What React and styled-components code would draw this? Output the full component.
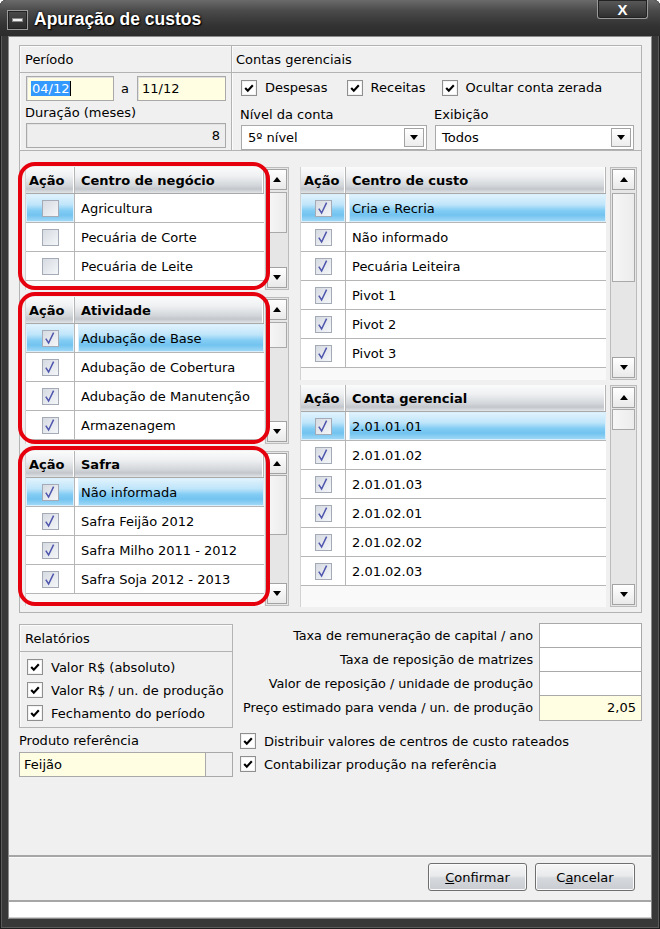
import React from 'react';
import styled, { createGlobalStyle } from 'styled-components';

const GlobalStyle = createGlobalStyle`
  html, body {
    margin: 0;
    padding: 0;
    background: #ffffff;
  }
  body {
    font-family: "DejaVu Sans", Verdana, sans-serif;
    font-size: 13px;
    color: #000;
  }
  * {
    box-sizing: border-box;
  }
`

const centrosNegocio = [
  {label: 'Agricultura', checked: false, selCheck: true},
  {label: 'Pecuária de Corte', checked: false},
  {label: 'Pecuária de Leite', checked: false}
]

const atividades = [
  {label: 'Adubação de Base', checked: true, selCheck: true, selText: true},
  {label: 'Adubação de Cobertura', checked: true},
  {label: 'Adubação de Manutenção', checked: true},
  {label: 'Armazenagem', checked: true}
]

const safras = [
  {label: 'Não informada', checked: true, selCheck: true, selText: true},
  {label: 'Safra Feijão 2012', checked: true},
  {label: 'Safra Milho 2011 - 2012', checked: true},
  {label: 'Safra Soja 2012 - 2013', checked: true}
]

const centrosCusto = [
  {label: 'Cria e Recria', checked: true, selCheck: true, selText: true},
  {label: 'Não informado', checked: true},
  {label: 'Pecuária Leiteira', checked: true},
  {label: 'Pivot 1', checked: true},
  {label: 'Pivot 2', checked: true},
  {label: 'Pivot 3', checked: true}
]

const contas = [
  {label: '2.01.01.01', checked: true, selCheck: true, selText: true},
  {label: '2.01.01.02', checked: true},
  {label: '2.01.01.03', checked: true},
  {label: '2.01.02.01', checked: true},
  {label: '2.01.02.02', checked: true},
  {label: '2.01.02.03', checked: true}
]

const CheckBox = ({checked = true}) => (
  <Box>
    {checked && (
      <svg width="14" height="14" viewBox="0 0 14 14">
        <path d="M3.2 7 L5.8 9.8 L10.8 4.2" fill="none" stroke="#000" strokeWidth="2.1" />
      </svg>
    )}
  </Box>
)

const GridCheck = ({checked}) => (
  <GBox>
    {checked && (
      <svg width="14" height="14" viewBox="0 0 14 14">
        <path d="M2.8 7.6 L5.6 12 L10.6 1.6" fill="none" stroke="#4e55ad" strokeWidth="1.5" />
      </svg>
    )}
  </GBox>
)

const Scrollbar = ({w, gap, thumbTop, thumbH}) => (
  <SbFrame $w={w} $gap={gap}>
    <SbButton><ArrowUp /></SbButton>
    <SbTrack>
      <SbThumb style={{marginTop: thumbTop, height: thumbH}} />
    </SbTrack>
    <SbButton><ArrowDown /></SbButton>
  </SbFrame>
)

const DataGrid = ({title, rows, actionW, height, sbW, sbGap, thumbTop, thumbH, hl}) => (
  <GridWrap $h={height} $hl={hl}>
    <Table>
      <HeadRow>
        <HeadCell $w={actionW}>Ação</HeadCell>
        <HeadCell>{title}</HeadCell>
      </HeadRow>
      {rows.map(r => (
        <Row key={r.label}>
          <CheckCell $w={actionW} $sel={r.selCheck}><GridCheck checked={r.checked} /></CheckCell>
          <TextCell $sel={r.selText}>{r.label}</TextCell>
        </Row>
      ))}
    </Table>
    <Scrollbar w={sbW} gap={sbGap} thumbTop={thumbTop} thumbH={thumbH} />
  </GridWrap>
)

const Select = ({value, w}) => (
  <SelectBox $w={w}>
    <span>{value}</span>
    <DropBtn><ArrowDown /></DropBtn>
  </SelectBox>
)

export default function App() {
  return (
    <>
      <GlobalStyle />
      <Window>
        <TitleBar>
          <MinIcon><MinBar /></MinIcon>
          <Title>Apuração de custos</Title>
          <CloseBtn>X</CloseBtn>
        </TitleBar>
        <Client>
          <Main>
            <TopRow>
              <GroupBox $w={213}>
                <GroupHeader>Período</GroupHeader>
                <PeriodBody>
                  <InlineRow>
                    <TextInput $w={88} $yellow><Selected>04/12</Selected><Caret /></TextInput>
                    <Between>a</Between>
                    <TextInput $w={89} $yellow>11/12</TextInput>
                  </InlineRow>
                  <FieldLabel>Duração (meses)</FieldLabel>
                  <TextInput $w={200} $disabled $right>8</TextInput>
                </PeriodBody>
              </GroupBox>
              <GroupBox $noLeft>
                <GroupHeader $pad={4}>Contas gerenciais</GroupHeader>
                <ContasBody>
                  <InlineRow>
                    <CheckLabel $mr={19}><CheckBox />Despesas</CheckLabel>
                    <CheckLabel $mr={16}><CheckBox />Receitas</CheckLabel>
                    <CheckLabel><CheckBox />Ocultar conta zerada</CheckLabel>
                  </InlineRow>
                  <SelectRow>
                    <SelectField>
                      <FieldLabel>Nível da conta</FieldLabel>
                      <Select value="5º nível" w={186} />
                    </SelectField>
                    <SelectField>
                      <FieldLabel>Exibição</FieldLabel>
                      <Select value="Todos" w={199} />
                    </SelectField>
                  </SelectRow>
                </ContasBody>
              </GroupBox>
            </TopRow>

            <GridsPanel>
              <LeftCol>
                <DataGrid title="Centro de negócio" rows={centrosNegocio} actionW={49} height={123}
                  sbW={24} sbGap={1} thumbTop={1} thumbH={41} hl />
                <DataGrid title="Atividade" rows={atividades} actionW={49} height={147}
                  sbW={24} sbGap={1} thumbTop={1} thumbH={26} hl />
                <DataGrid title="Safra" rows={safras} actionW={49} height={155}
                  sbW={24} sbGap={1} thumbTop={0} thumbH={60} hl />
              </LeftCol>
              <RightCol>
                <DataGrid title="Centro de custo" rows={centrosCusto} actionW={45} height={213}
                  sbW={27} sbGap={4} thumbTop={2} thumbH={89} />
                <DataGrid title="Conta gerencial" rows={contas} actionW={45} height={222}
                  sbW={27} sbGap={4} thumbTop={0} thumbH={21} />
              </RightCol>
            </GridsPanel>

            <BottomArea>
              <BottomLeft>
                <GroupBox $w={214} $h={104}>
                  <GroupHeader>Relatórios</GroupHeader>
                  <ReportList>
                    <CheckLabel><CheckBox />Valor R$ (absoluto)</CheckLabel>
                    <CheckLabel><CheckBox />Valor R$ / un. de produção</CheckLabel>
                    <CheckLabel><CheckBox />Fechamento do período</CheckLabel>
                  </ReportList>
                </GroupBox>
                <ProdutoLabel>Produto referência</ProdutoLabel>
                <LookupBox>
                  <LookupText>Feijão</LookupText>
                  <LookupBtn />
                </LookupBox>
              </BottomLeft>
              <BottomRight>
                <FieldRow>
                  <RowLabel>Taxa de remuneração de capital / ano</RowLabel>
                  <RowInput />
                </FieldRow>
                <FieldRow>
                  <RowLabel>Taxa de reposição de matrizes</RowLabel>
                  <RowInput />
                </FieldRow>
                <FieldRow>
                  <RowLabel>Valor de reposição / unidade de produção</RowLabel>
                  <RowInput />
                </FieldRow>
                <FieldRow>
                  <RowLabel>Preço estimado para venda / un. de produção</RowLabel>
                  <RowInput $yellow>2,05</RowInput>
                </FieldRow>
                <OptionList>
                  <CheckLabel><CheckBox />Distribuir valores de centros de custo rateados</CheckLabel>
                  <CheckLabel><CheckBox />Contabilizar produção na referência</CheckLabel>
                </OptionList>
              </BottomRight>
            </BottomArea>
          </Main>

          <ButtonBar>
            <DlgButton $w={99}><u>C</u>onfirmar</DlgButton>
            <DlgButton $w={100}>C<u>a</u>ncelar</DlgButton>
          </ButtonBar>
          <StatusBar />
        </Client>
      </Window>
    </>
  )
}

const Window = styled.div`
  width: 660px;
  height: 929px;
  background: #383838;
  border-radius: 6px 6px 0 0;
  box-shadow: inset 0 0 0 1px #1e1e1e, inset 0 0 0 2px #5a5a5a;

  display: flex;
  flex-direction: column;

  padding: 0 8px 10px 8px;
`

const TitleBar = styled.div`
  height: 36px;
  margin: 0 -8px;
  padding: 0 12px 0 7px;
  border-radius: 6px 6px 0 0;
  background: linear-gradient(#6a6a6a 0%, #4a4a4a 30%, #333 70%, #2c2c2c 100%);

  display: flex;
  align-items: center;
`

const MinIcon = styled.div`
  width: 21px;
  height: 20px;
  margin-top: 4px;
  border: 1px solid #9a9a9a;
  background: linear-gradient(#4a4a4a, #2a2a2a);
  box-shadow: inset 0 0 0 1px #222;

  display: flex;
  align-items: center;
  justify-content: center;
`

const MinBar = styled.div`
  width: 11px;
  height: 4px;
  background: #f0f0f0;
  border: 1px solid #888;
`

const Title = styled.div`
  flex: 1;
  margin-left: 6px;
  margin-top: 2px;

  font-family: "Liberation Sans", Arial, sans-serif;
  font-size: 17.5px;
  font-weight: bold;
  color: #ffffff;
  text-shadow: 0 0 3px #000, 1px 1px 1px #000;
`

const CloseBtn = styled.div`
  align-self: flex-start;
  width: 51px;
  height: 19px;
  border: 1px solid #9a9a9a;
  border-top: none;
  border-radius: 0 0 3px 3px;
  background: linear-gradient(#5a5a5a, #2e2e2e);
  box-shadow: inset 0 0 0 1px #222;

  display: flex;
  align-items: center;
  justify-content: center;

  font-family: "Liberation Sans", Arial, sans-serif;
  font-weight: bold;
  font-size: 15px;
  color: #fff;
`

const Client = styled.div`
  flex: 1;
  background: #f0f0f0;
  border: 1px solid #8a8a8a;

  display: flex;
  flex-direction: column;
`

const Main = styled.div`
  flex: 1;
  padding: 8px 9px 0 10px;

  display: flex;
  flex-direction: column;
`

const TopRow = styled.div`
  height: 106px;
  display: flex;
`

const GroupBox = styled.div`
  width: ${p => p.$w ? p.$w + 'px' : 'auto'};
  height: ${p => p.$h ? p.$h + 'px' : 'auto'};
  flex: ${p => p.$w ? 'none' : 1};

  border: 1px solid #b3b3b3;
  ${p => p.$noLeft && 'border-left: none;'}
  box-shadow: inset 1px 1px 0 #fbfbfb;

  display: flex;
  flex-direction: column;
`

const GroupHeader = styled.div`
  height: 27px;
  padding: 0 ${p => p.$pad || 5}px;
  border-bottom: 1px solid #b3b3b3;

  display: flex;
  align-items: center;
`

const PeriodBody = styled.div`
  padding: 3px 5px 0 6px;

  display: flex;
  flex-direction: column;
`

const ContasBody = styled.div`
  padding: 2px 6px 0 9px;

  display: flex;
  flex-direction: column;
`

const InlineRow = styled.div`
  display: flex;
  align-items: center;
  height: 25px;
`

const TextInput = styled.div`
  width: ${p => p.$w}px;
  height: 25px;
  padding: 0 5px 0 4px;
  border: 1px solid #a9a9a9;
  box-shadow: inset 1px 1px 0 #e2e2e2;
  background: ${p => p.$yellow ? '#fffde2' : p.$disabled ? '#eeeeee' : '#ffffff'};

  display: flex;
  align-items: center;
  justify-content: ${p => p.$right ? 'flex-end' : 'flex-start'};
`

const Selected = styled.span`
  background: #3399ff;
  color: #ffffff;
  padding: 0 1px;
`

const Caret = styled.span`
  width: 1px;
  height: 15px;
  background: #000;
`

const Between = styled.span`
  margin: 0 8px 0 7px;
`

const FieldLabel = styled.div`
  height: 22px;
  display: flex;
  align-items: center;
  margin-left: -1px;
`

const CheckLabel = styled.label`
  display: flex;
  align-items: center;
  gap: 8px;
  margin-right: ${p => p.$mr || 0}px;
  white-space: nowrap;
`

const Box = styled.span`
  width: 16px;
  height: 16px;
  border: 1px solid #8f8f8f;
  background: #ffffff;
  box-shadow: inset 0 0 0 1px #f2f2f2;

  display: flex;
  align-items: center;
  justify-content: center;
`

const SelectRow = styled.div`
  display: flex;
  gap: 8px;
  margin-top: 3px;
`

const SelectField = styled.div`
  display: flex;
  flex-direction: column;
`

const SelectBox = styled.div`
  width: ${p => p.$w}px;
  height: 25px;
  padding: 0 2px 0 6px;
  border: 1px solid #a9a9a9;
  background: #ffffff;

  display: flex;
  align-items: center;
  justify-content: space-between;
`

const DropBtn = styled.span`
  width: 20px;
  height: 19px;
  border: 1px solid #a3a3a3;
  background: linear-gradient(#ffffff, #ececec);

  display: flex;
  align-items: center;
  justify-content: center;
`

const ArrowUp = styled.span`
  width: 0;
  height: 0;
  border-left: 4px solid transparent;
  border-right: 4px solid transparent;
  border-bottom: 5px solid #000;
`

const ArrowDown = styled.span`
  width: 0;
  height: 0;
  border-left: 4px solid transparent;
  border-right: 4px solid transparent;
  border-top: 5px solid #000;
`

const GridsPanel = styled.div`
  height: 462px;
  padding: 16px 4px 0 5px;
  border: 1px solid #b3b3b3;
  border-top: none;

  display: flex;
  gap: 11px;
`

const LeftCol = styled.div`
  width: 264px;

  display: flex;
  flex-direction: column;
  gap: 7px;
`

const RightCol = styled.div`
  flex: 1;

  display: flex;
  flex-direction: column;
  gap: 5px;
`

const GridWrap = styled.div`
  height: ${p => p.$h}px;
  position: relative;
  display: flex;

  ${p => p.$hl && `
    &::after {
      content: '';
      position: absolute;
      left: -7px;
      top: -5px;
      right: 19px;
      bottom: 0;
      border: 4px solid #e6000e;
      border-radius: 17px;
      pointer-events: none;
    }
  `}
`

const Table = styled.div`
  flex: 1;
  overflow: hidden;
  background: #f9f9f9;
  border-left: 1px solid #d2d2d2;

  display: flex;
  flex-direction: column;
`

const HeadRow = styled.div`
  height: 27px;
  flex: none;
  border-bottom: 1px solid #a9a9a9;
  background: linear-gradient(#fbfbfb 0%, #eef0f2 35%, #d4d7db 70%, #c3c7cc 85%, #e2e4e6 100%);

  display: flex;
`

const HeadCell = styled.div`
  width: ${p => p.$w ? p.$w + 'px' : 'auto'};
  flex: ${p => p.$w ? 'none' : 1};
  padding-left: ${p => p.$w ? 3 : 6}px;
  border-right: 1px solid #b5b5b5;
  box-shadow: inset -1px 0 0 #fff;

  display: flex;
  align-items: center;

  font-weight: bold;
  white-space: nowrap;
`

const Row = styled.div`
  height: 29px;
  flex: none;
  background: #ffffff;
  border-bottom: 1px solid #b6b6b6;

  display: flex;
`

const selGradient = 'linear-gradient(#e3f4fd 0%, #bfe5fa 38%, #84cdf4 58%, #72c3f0 75%, #a6dbf7 100%)'

const CheckCell = styled.div`
  width: ${p => p.$w}px;
  flex: none;
  border-right: 1px solid #b6b6b6;
  background: ${p => p.$sel ? selGradient : '#ffffff'};
  box-shadow: ${p => p.$sel ? 'inset 0 0 0 1px #d9effb' : 'none'};

  display: flex;
  align-items: center;
  justify-content: center;
`

const TextCell = styled.div`
  flex: 1;
  padding-left: ${p => p.$sel ? 3 : 6}px;
  background: ${p => p.$sel ? selGradient : '#ffffff'};
  box-shadow: ${p => p.$sel ? 'inset 0 0 0 1px #d9effb' : 'none'};
  ${p => p.$sel && 'margin-left: 3px;'}

  display: flex;
  align-items: center;
  white-space: nowrap;
`

const GBox = styled.span`
  width: 17px;
  height: 17px;
  border: 1px solid #a4abb6;
  background: linear-gradient(135deg, #d6dbe2, #f4f6f8);

  display: flex;
  align-items: center;
  justify-content: center;
`

const SbFrame = styled.div`
  width: ${p => p.$w}px;
  margin-left: ${p => p.$gap}px;
  padding: 1px;
  border: 1px solid #bcbcbc;
  background: #e6e6e6;

  display: flex;
  flex-direction: column;
`

const SbButton = styled.div`
  height: 21px;
  flex: none;
  border: 1px solid #a2a2a2;
  background: linear-gradient(#ffffff, #e9e9e9);

  display: flex;
  align-items: center;
  justify-content: center;
`

const SbTrack = styled.div`
  flex: 1;
  padding-top: 1px;
`

const SbThumb = styled.div`
  border: 1px solid #a9a9a9;
  background: linear-gradient(to right, #f6f6f6, #ececec);
`

const BottomArea = styled.div`
  flex: 1;
  padding-top: 11px;

  display: flex;
  gap: 7px;
`

const BottomLeft = styled.div`
  width: 214px;

  display: flex;
  flex-direction: column;
`

const ReportList = styled.div`
  padding: 7px 0 0 7px;

  display: flex;
  flex-direction: column;
  gap: 7px;
`

const ProdutoLabel = styled.div`
  height: 24px;
  display: flex;
  align-items: center;
`

const LookupBox = styled.div`
  height: 25px;
  border: 1px solid #a9a9a9;

  display: flex;
`

const LookupText = styled.div`
  flex: 1;
  padding-left: 4px;
  background: #fffde2;
  border-right: 1px solid #a9a9a9;

  display: flex;
  align-items: center;
`

const LookupBtn = styled.div`
  width: 26px;
  background: #f0f0f0;
`

const BottomRight = styled.div`
  flex: 1;
  min-width: 0;

  display: flex;
  flex-direction: column;
`

const FieldRow = styled.div`
  height: 25px;
  margin-top: -1px;

  display: flex;
  align-items: center;
  justify-content: flex-end;
`

const RowLabel = styled.span`
  margin-right: 6px;
  white-space: nowrap;
  font-size: 12.8px;
  letter-spacing: -0.05px;
`

const RowInput = styled.div`
  width: 103px;
  flex: none;
  height: 26px;
  padding: 0 5px;
  border: 1px solid #a9a9a9;
  background: ${p => p.$yellow ? '#fffde2' : '#ffffff'};

  display: flex;
  align-items: center;
  justify-content: flex-end;
`

const OptionList = styled.div`
  padding-top: 13px;

  display: flex;
  flex-direction: column;
  gap: 7px;
`

const ButtonBar = styled.div`
  height: 45px;
  padding: 6px 16px 0 0;
  border-top: 2px solid #a6a6a6;
  box-shadow: inset 0 1px 0 #fafafa;

  display: flex;
  justify-content: flex-end;
  gap: 8px;
`

const DlgButton = styled.button`
  width: ${p => p.$w}px;
  height: 28px;
  border: 1px solid #6f6f6f;
  border-radius: 3px;
  background: linear-gradient(#f6f6f6 0%, #e9eaec 45%, #d5d8dc 55%, #c9cdd2 100%);
  box-shadow: inset 0 0 0 1px #fbfbfb;

  font-family: "DejaVu Sans", Verdana, sans-serif;
  font-size: 13px;
  color: #000;
  padding: 0;
`

const StatusBar = styled.div`
  height: 18px;
  border-top: 2px solid #a6a6a6;
  background: #ffffff;
  box-shadow: inset 0 -1px 0 #d0d0d0;
`
